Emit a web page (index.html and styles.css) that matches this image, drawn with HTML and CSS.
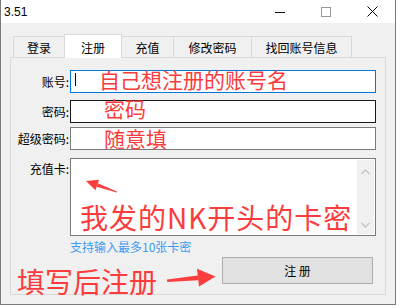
FILE: index.html
```html
<!DOCTYPE html>
<html lang="zh-CN">
<head>
    <meta charset="UTF-8">
    <title>3.51</title>
    <link rel="stylesheet" href="styles.css">
</head>
<body>
    <div class="window">
        <div class="titlebar">
            <span class="title">3.51</span>
            <div class="controls">
                <span class="ctl">
                    <svg width="10" height="10" viewBox="0 0 10 10"><line x1="0" y1="5.5" x2="10" y2="5.5" stroke="#000" stroke-width="1"/></svg>
                </span>
                <span class="ctl">
                    <svg width="10" height="10" viewBox="0 0 10 10"><rect x="0.5" y="0.5" width="9" height="9" fill="none" stroke="#999" stroke-width="1"/></svg>
                </span>
                <span class="ctl">
                    <svg width="11" height="11" viewBox="0 0 11 11"><path d="M0.5 0.5 L10.5 10.5 M10.5 0.5 L0.5 10.5" stroke="#000" stroke-width="1"/></svg>
                </span>
            </div>
        </div>

        <div class="client">
            <div class="tabs">
                <div class="tab t-login">登录</div>
                <div class="tab t-reg active">注册</div>
                <div class="tab t-pay">充值</div>
                <div class="tab t-pwd">修改密码</div>
                <div class="tab t-find">找回账号信息</div>
            </div>

            <div class="panel">
                <div class="row">
                    <span class="label">账号:</span>
                    <div class="field focus"><span class="caret"></span></div>
                </div>
                <div class="row row-pwd">
                    <span class="label">密码:</span>
                    <div class="field hover"></div>
                </div>
                <div class="row row-super">
                    <span class="label">超级密码:</span>
                    <div class="field"></div>
                </div>
                <div class="row row-card">
                    <span class="label label-top">充值卡:</span>
                    <div class="field cardbox">
                        <div class="scrollbar">
                            <svg width="9" height="6" viewBox="0 0 9 6"><path d="M0.5 5 L4.5 1 L8.5 5" fill="none" stroke="#c4c4c4" stroke-width="1.3"/></svg>
                            <svg width="9" height="6" viewBox="0 0 9 6"><path d="M0.5 1 L4.5 5 L8.5 1" fill="none" stroke="#c4c4c4" stroke-width="1.3"/></svg>
                        </div>
                    </div>
                </div>
                <div class="hint">支持输入最多10张卡密</div>
                <div class="actions">
                    <button class="btn">注 册</button>
                </div>
            </div>
        </div>
    </div>

    <!-- red notes drawn over the screenshot -->
    <span class="note note-user">自己想注册的账号名</span>
    <span class="note note-pwd">密码</span>
    <span class="note note-super">随意填</span>
    <span class="note big note-card">我发的NK开头的卡密</span>
    <span class="note big note-submit">填写后注册</span>

    <svg class="arrows" width="400" height="308" viewBox="0 0 400 308">
        <polygon points="86,181 99,179.8 95.4,190.2" fill="#fb3c3c"/>
        <polygon points="96.6,186.8 97.9,183.2 117.3,191.7 116.8,192.6" fill="#fb3c3c"/>
        <polygon points="215.5,276.5 197,268.8 199,286.5" fill="#fb3c3c"/>
        <polygon points="198.3,280.3 197.8,275.6 167,279.6 167.2,282" fill="#fb3c3c"/>
    </svg>
</body>
</html>
```

FILE: styles.css
```css
body {
    margin: 0;
    width: 400px;
    height: 308px;
    overflow: hidden;
    position: relative;
    background-color: #fff;
    font-family: "Noto Sans CJK SC", sans-serif;
    font-size: 12px;
    color: #000;
}

.window {
    width: 396px;
    height: 305px;
    box-sizing: border-box;
    border: 1px solid #7a7a7a;
    border-top: none;
    background-color: #f0f0f0;
}

.titlebar {
    height: 23px;
    display: flex;
    align-items: center;
    background-color: #fff;
}

.title {
    margin-left: 3px;
    font-family: "Liberation Sans", Arial, sans-serif;
    font-size: 12px;
}

.controls {
    margin-left: auto;
    display: flex;
    height: 23px;
}

.ctl {
    width: 46px;
    display: flex;
    align-items: center;
    justify-content: center;
}

.client {
    padding: 11px 9px 0 9px;
}

.tabs {
    display: flex;
    align-items: flex-end;
    height: 23px;
    margin-left: 3px;
}

.tab {
    box-sizing: border-box;
    height: 21px;
    padding-top: 2px;
    line-height: 18px;
    border: 1px solid #d9d9d9;
    border-bottom: none;
    margin-left: -1px;
    text-align: center;
    background-color: #f0f0f0;
}

.tab.active {
    height: 24px;
    padding-top: 2px;
    line-height: 21px;
    margin-bottom: -1px;
    position: relative;
    z-index: 1;
    background-color: #fff;
}

.t-login { width: 52px; margin-left: 0; }
.t-reg { width: 58px; }
.t-pay { width: 53px; }
.t-pwd { width: 79px; }
.t-find { width: 101px; }

.panel {
    box-sizing: border-box;
    height: 238px;
    border: 1px solid #d9d9d9;
    padding: 12px 9px 0 0;
}

.row {
    display: flex;
    align-items: center;
}

.row-pwd { margin-top: 7px; }
.row-super { margin-top: 4px; }
.row-card {
    margin-top: 8px;
    align-items: flex-start;
}

.label {
    width: 58px;
    margin-right: 1px;
    text-align: right;
    line-height: 16px;
}

.label-top {
    padding-top: 3px;
}

.field {
    flex: 1;
    height: 23px;
    box-sizing: border-box;
    border: 1px solid #7a7a7a;
    background-color: #fff;
    position: relative;
}

.field.focus {
    border-color: #0078d7;
}

.field.hover {
    border-color: #171717;
}

.caret {
    position: absolute;
    left: 4px;
    top: 2px;
    width: 1px;
    height: 13px;
    background-color: #000;
}

.cardbox {
    height: 78px;
    padding: 1px;
    display: flex;
    justify-content: flex-end;
}

.scrollbar {
    width: 17px;
    background-color: #f0f0f0;
    display: flex;
    flex-direction: column;
    align-items: center;
    justify-content: space-between;
    padding: 9px 0 6px;
}

.hint {
    margin: 3px 0 0 59px;
    line-height: 16px;
    color: #3a9bf0;
}

.actions {
    display: flex;
    justify-content: flex-end;
    margin-top: 2px;
    padding-right: 3px;
}

.btn {
    width: 151px;
    height: 27px;
    box-sizing: border-box;
    border: 1px solid #adadad;
    background-color: #e1e1e1;
    font-family: "Noto Sans CJK SC", sans-serif;
    font-size: 12px;
    color: #000;
    padding: 0;
}

.note {
    position: absolute;
    color: #fb3c3c;
    font-size: 21px;
    line-height: 21px;
    white-space: nowrap;
}

.note.big {
    font-size: 28px;
    line-height: 28px;
}

.note-user { left: 99px; top: 69px; }
.note-pwd { left: 104px; top: 98px; }
.note-super { left: 104px; top: 128px; }
.note-card { left: 80px; top: 203px; font-size: 29px; letter-spacing: 1px; }
.note-submit { left: 17px; top: 267px; }

.arrows {
    position: absolute;
    left: 0;
    top: 0;
    pointer-events: none;
}
```
